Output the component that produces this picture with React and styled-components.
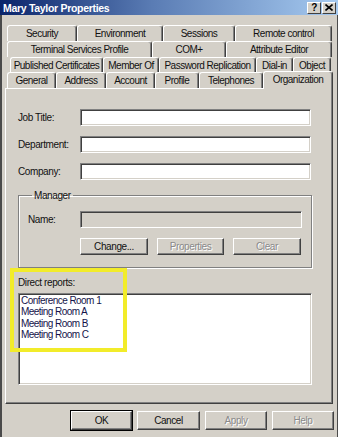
import React from "react";
import styled, { createGlobalStyle } from "styled-components";

const GlobalStyle = createGlobalStyle`
  html, body {
    margin: 0;
    padding: 0;
    background: #d4d0c8;
  }
  * {
    box-sizing: border-box;
  }
`;

const Dialog = styled.div`
  position: relative;
  width: 338px;
  height: 437px;
  background: #d4d0c8;
  font-family: "Liberation Sans", Arial, sans-serif;
  font-size: 10px;
  letter-spacing: -0.4px;
  color: #111;
  overflow: hidden;
`;

const TitleBar = styled.div`
  height: 15px;
  display: flex;
  align-items: center;
  justify-content: space-between;
  padding: 0 2px 0 3px;
  background: linear-gradient(to right, #0a246a 0%, #5a7cb4 45%, #a6caf0 100%);
`;

const Title = styled.span`
  color: #fff;
  font-weight: bold;
  font-size: 10.5px;
  letter-spacing: -0.3px;
`;

const TitleButtons = styled.div`
  display: flex;
  gap: 1px;
`;

const TitleButton = styled.div`
  width: 14px;
  height: 12px;
  display: flex;
  align-items: center;
  justify-content: center;
  background: #d4d0c8;
  border-top: 1px solid #fff;
  border-left: 1px solid #fff;
  border-right: 1px solid #404040;
  border-bottom: 1px solid #404040;
  font-weight: bold;
  font-size: 10px;
  line-height: 1;
  color: #000;
`;

const Body = styled.div`
  height: 422px;
  border-left: 2px solid #4a4a4a;
  border-right: 1px solid #4a4a4a;
  padding: 10px 4px 0 3px;
  display: flex;
  flex-direction: column;
`;

const TabStack = styled.div`
  display: flex;
  flex-direction: column;
`;

const TabRow = styled.div`
  display: flex;
  align-items: flex-end;
  height: ${({ $h }) => $h || 16}px;
  padding-left: ${({ $indent }) => $indent}px;
`;

const Tab = styled.div`
  position: relative;
  width: ${({ $w }) => $w}px;
  height: ${({ $active }) => ($active ? 18 : 16)}px;
  margin-bottom: ${({ $active }) => ($active ? -1 : 0)}px;
  z-index: ${({ $active }) => ($active ? 2 : 1)};
  display: flex;
  align-items: center;
  justify-content: center;
  background: #d4d0c8;
  border-top: 1px solid #fff;
  border-left: 1px solid #fff;
  border-right: 1px solid #404040;
  box-shadow: inset -1px 0 0 #808080;
  border-radius: 3px 3px 0 0;
  white-space: nowrap;
  letter-spacing: -0.5px;
  padding-bottom: ${({ $active }) => ($active ? 3 : 0)}px;
`;

const Panel = styled.div`
  height: 316px;
  border-top: 1px solid #fff;
  border-left: 1px solid #fff;
  border-right: 1px solid #404040;
  border-bottom: 1px solid #404040;
  box-shadow: inset -1px -1px 0 #808080;
  padding: 20px 0 0 12px;
  display: flex;
  flex-direction: column;
`;

const FieldGrid = styled.div`
  display: grid;
  grid-template-columns: ${({ $label }) => $label}px ${({ $input }) => $input}px;
  grid-auto-rows: 17px;
  row-gap: 10px;
  align-items: center;
`;

const Label = styled.label`
  white-space: nowrap;
`;

const TextBox = styled.div`
  height: 17px;
  background: ${({ $disabled }) => ($disabled ? "#d4d0c8" : "#fff")};
  border-top: 1px solid #808080;
  border-left: 1px solid #808080;
  border-right: 1px solid #fff;
  border-bottom: 1px solid #fff;
  box-shadow: inset 1px 1px 0 #404040, inset -1px -1px 0 #d4d0c8;
`;

const Group = styled.fieldset`
  width: 294px;
  margin: 10px 0 0 0;
  padding: 10px 9px 12px 9px;
  border: 1px solid #808080;
  box-shadow: 1px 1px 0 #fff, inset 1px 1px 0 #fff;
`;

const Legend = styled.legend`
  padding: 0 2px;
  margin-left: 4px;
  line-height: 11px;
`;

const ButtonRow = styled.div`
  display: flex;
  gap: ${({ $gap }) => $gap}px;
  margin-top: ${({ $top }) => $top || 0}px;
  padding-left: ${({ $indent }) => $indent || 0}px;
  justify-content: ${({ $end }) => ($end ? "flex-end" : "flex-start")};
`;

const Button = styled.div`
  width: ${({ $w }) => $w}px;
  height: ${({ $h }) => $h || 17}px;
  display: flex;
  align-items: center;
  justify-content: center;
  background: #d4d0c8;
  border-top: 1px solid #fff;
  border-left: 1px solid #fff;
  border-right: 1px solid #404040;
  border-bottom: 1px solid #404040;
  box-shadow: inset -1px -1px 0 #808080
    ${({ $default }) => ($default ? ", 0 0 0 1px #000" : "")};
  color: ${({ $disabled }) => ($disabled ? "#8a8a8a" : "#111")};
  text-shadow: ${({ $disabled }) => ($disabled ? "1px 1px 0 #fff" : "none")};
`;

const SectionLabel = styled.div`
  margin-top: 9px;
  line-height: 11px;
`;

const ListBox = styled.div`
  width: 294px;
  height: 92px;
  margin-top: 5px;
  padding: 0 2px;
  background: #fff;
  border-top: 1px solid #808080;
  border-left: 1px solid #808080;
  border-right: 1px solid #fff;
  border-bottom: 1px solid #fff;
  box-shadow: inset 1px 1px 0 #404040, inset -1px -1px 0 #d4d0c8;
  padding-top: 1px;
`;

const ListItem = styled.div`
  line-height: 11.3px;
  color: #14144a;
  letter-spacing: -0.55px;
`;

const Footer = styled(ButtonRow)`
  margin-top: 7px;
  margin-right: -1px;
`;

const Highlight = styled.div`
  position: absolute;
  left: 10px;
  top: 268px;
  width: 117px;
  height: 84px;
  border: 4px solid #f2ec2a;
  pointer-events: none;
`;

const tabRows = [
  { indent: 2, h: 16, tabs: [["Security", 70], ["Environment", 86], ["Sessions", 72], ["Remote control", 97]] },
  { indent: 2, h: 16, tabs: [["Terminal Services Profile", 145], ["COM+", 74], ["Attribute Editor", 106]] },
  { indent: 5, h: 16, tabs: [["Published Certificates", 93], ["Member Of", 56], ["Password Replication", 97], ["Dial-in", 37], ["Object", 38]] },
  { indent: 2, h: 15, tabs: [["General", 49], ["Address", 50], ["Account", 49], ["Profile", 44], ["Telephones", 64], ["Organization", 70, true]] },
];

const reports = ["Conference Room 1", "Meeting Room A", "Meeting Room B", "Meeting Room C"];

export default function App() {
  return (
    <>
      <GlobalStyle />
      <Dialog>
        <TitleBar>
          <Title>Mary Taylor Properties</Title>
          <TitleButtons>
            <TitleButton>?</TitleButton>
            <TitleButton>
              <svg width="8" height="7" viewBox="0 0 8 7">
                <path d="M0.5 0.5 L7.5 6.5 M7.5 0.5 L0.5 6.5" stroke="#000" strokeWidth="1.6" />
              </svg>
            </TitleButton>
          </TitleButtons>
        </TitleBar>

        <Body>
          <TabStack>
            {tabRows.map((row, i) => (
              <TabRow key={i} $indent={row.indent} $h={row.h}>
                {row.tabs.map(([name, w, active]) => (
                  <Tab key={name} $w={w} $active={active}>
                    {name}
                  </Tab>
                ))}
              </TabRow>
            ))}
          </TabStack>

          <Panel>
            <FieldGrid $label={62} $input={231}>
              <Label>Job Title:</Label>
              <TextBox />
              <Label>Department:</Label>
              <TextBox />
              <Label>Company:</Label>
              <TextBox />
            </FieldGrid>

            <Group>
              <Legend>Manager</Legend>
              <FieldGrid $label={52} $input={222}>
                <Label>Name:</Label>
                <TextBox $disabled />
              </FieldGrid>
              <ButtonRow $gap={9} $top={10} $indent={52}>
                <Button $w={68}>Change...</Button>
                <Button $w={67} $disabled>Properties</Button>
                <Button $w={68} $disabled>Clear</Button>
              </ButtonRow>
            </Group>

            <SectionLabel>Direct reports:</SectionLabel>
            <ListBox>
              {reports.map((r) => (
                <ListItem key={r}>{r}</ListItem>
              ))}
            </ListBox>
          </Panel>

          <Footer $gap={5} $end>
            <Button $w={61} $h={19} $default>OK</Button>
            <Button $w={63} $h={19}>Cancel</Button>
            <Button $w={62} $h={19} $disabled>Apply</Button>
            <Button $w={62} $h={19} $disabled>Help</Button>
          </Footer>
        </Body>

        <Highlight />
      </Dialog>
    </>
  );
}
